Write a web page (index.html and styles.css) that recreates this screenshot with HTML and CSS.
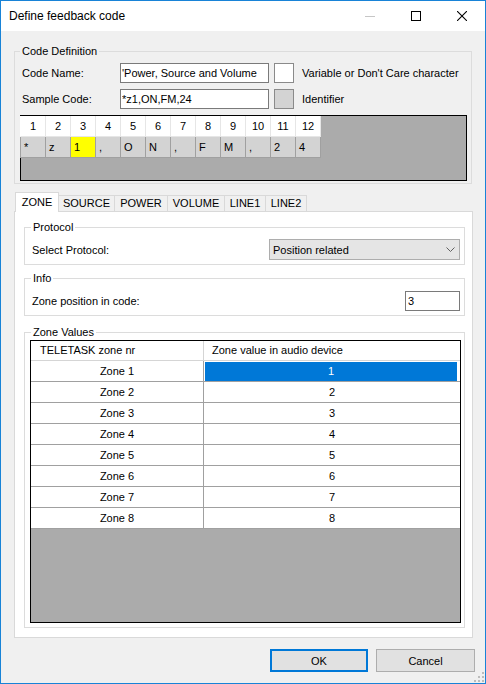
FILE: index.html
```html
<!DOCTYPE html>
<html lang="en">
<head>
  <meta charset="UTF-8">
  <title>Define feedback code</title>
  <link rel="stylesheet" href="styles.css">
</head>
<body>
  <div class="window">
    <div class="titlebar">
      <span class="title">Define feedback code</span>
      <div class="caption-buttons">
        <span class="cap-btn">
          <svg width="10" height="10" viewBox="0 0 10 10"><line x1="0" y1="5.5" x2="10" y2="5.5" stroke="#c6c6c6" /></svg>
        </span>
        <span class="cap-btn">
          <svg width="10" height="10" viewBox="0 0 10 10"><rect x="0.5" y="0.5" width="9" height="9" fill="none" stroke="#000" /></svg>
        </span>
        <span class="cap-btn">
          <svg width="10" height="10" viewBox="0 0 10 10"><path d="M0 0 L10 10 M10 0 L0 10" stroke="#000" stroke-width="1.1" /></svg>
        </span>
      </div>
    </div>

    <div class="client">
      <fieldset class="group code-def">
        <legend>Code Definition</legend>
        <div class="field-row">
          <label class="field-label" for="codeName">Code Name:</label>
          <input class="textbox" id="codeName" value="'Power, Source and Volume">
          <span class="swatch"></span>
          <span class="swatch-text">Variable or Don't Care character</span>
        </div>
        <div class="field-row">
          <label class="field-label" for="sampleCode">Sample Code:</label>
          <input class="textbox" id="sampleCode" value="*z1,ON,FM,24">
          <span class="swatch ident"></span>
          <span class="swatch-text">Identifier</span>
        </div>
        <div class="code-panel">
          <div class="code-grid" id="codeGrid"></div>
        </div>
      </fieldset>

      <div class="tabs">
        <span class="tab active">ZONE</span>
        <span class="tab w-source">SOURCE</span>
        <span class="tab w-power">POWER</span>
        <span class="tab w-volume">VOLUME</span>
        <span class="tab w-line">LINE1</span>
        <span class="tab w-line last">LINE2</span>
      </div>

      <div class="tab-page">
        <fieldset class="group protocol">
          <legend>Protocol</legend>
          <div class="inline-row">
            <span>Select Protocol:</span>
            <div class="combo">
              <span>Position related</span>
              <svg width="9" height="5" viewBox="0 0 9 5"><polyline points="0.5,0.5 4.5,4.5 8.5,0.5" fill="none" stroke="#606060" /></svg>
            </div>
          </div>
        </fieldset>

        <fieldset class="group info">
          <legend>Info</legend>
          <div class="inline-row">
            <span>Zone position in code:</span>
            <input class="textbox small" value="3">
          </div>
        </fieldset>

        <fieldset class="group zone-values">
          <legend>Zone Values</legend>
          <div class="zone-grid">
            <div class="zg-row zg-head">
              <div class="zg-cell">TELETASK zone nr</div>
              <div class="zg-cell">Zone value in audio device</div>
            </div>
            <div id="zoneRows"></div>
          </div>
        </fieldset>
      </div>

      <div class="buttons">
        <button class="btn default">OK</button>
        <button class="btn">Cancel</button>
      </div>
    </div>

    <svg class="grip" width="10" height="10" viewBox="0 0 10 10" fill="#bcbcbc">
      <rect x="8" y="0" width="2" height="2" />
      <rect x="4" y="4" width="2" height="2" />
      <rect x="8" y="4" width="2" height="2" />
      <rect x="0" y="8" width="2" height="2" />
      <rect x="4" y="8" width="2" height="2" />
      <rect x="8" y="8" width="2" height="2" />
    </svg>
  </div>

  <script>
    const sample = "*z1,ON,FM,24";
    const zonePos = 3;

    // position numbers on top, characters of the sample code below
    const grid = document.getElementById("codeGrid");
    for (let i = 1; i <= sample.length; i++) {
      const cell = document.createElement("div");
      cell.className = "cg-head";
      cell.textContent = i;
      grid.appendChild(cell);
    }
    for (let i = 0; i < sample.length; i++) {
      const cell = document.createElement("div");
      cell.className = "cg-char" + (i + 1 === zonePos ? " zone" : "");
      cell.textContent = sample[i];
      grid.appendChild(cell);
    }

    const rows = document.getElementById("zoneRows");
    for (let z = 1; z <= 8; z++) {
      const row = document.createElement("div");
      row.className = "zg-row";
      row.innerHTML = `
        <div class="zg-cell">Zone ${z}</div>
        <div class="zg-cell">${z === 1 ? '<span class="selected">1</span>' : z}</div>
      `;
      rows.appendChild(row);
    }
  </script>
</body>
</html>
```

FILE: styles.css
```css
* {
  box-sizing: border-box;
}

body {
  margin: 0;
  font-family: "Liberation Sans", Arial, sans-serif;
  font-size: 11px;
  color: #000;
  background: #f0f0f0;
}

.window {
  position: relative;
  width: 486px;
  height: 684px;
  border: 1px solid #1883d7;
  background: #f0f0f0;
}

.titlebar {
  height: 30px;
  background: #fff;
  display: flex;
  align-items: center;
  justify-content: space-between;
}

.title {
  font-size: 12px;
  padding-left: 8px;
  padding-bottom: 1px;
}

.caption-buttons {
  display: flex;
  height: 30px;
}

.cap-btn {
  width: 46px;
  display: flex;
  align-items: center;
  justify-content: center;
  padding-bottom: 1px;
}

.client {
  padding: 0 12px 0 13px;
}

/* group boxes */
.group {
  margin: 0;
  border: 1px solid #dcdcdc;
  min-width: 0;
}

.group legend {
  padding: 0 2px;
  line-height: 13px;
}

.code-def {
  margin-top: 14px;
  width: 458px;
  padding: 5px 4px 2px 5px;
}

.field-row {
  display: flex;
  align-items: center;
  height: 20px;
  margin-bottom: 6px;
  padding-left: 2px;
}

.field-label {
  width: 98px;
}

.textbox {
  width: 149px;
  height: 20px;
  border: 1px solid #7a7a7a;
  background: #fff;
  font: inherit;
  padding: 0 1px;
  margin: 0;
  outline: none;
}

.textbox.small {
  width: 55px;
}

.swatch {
  width: 20px;
  height: 20px;
  margin-left: 5px;
  border: 1px solid #8a8a8a;
  background: #fff;
}

.swatch.ident {
  background: #d3d3d3;
}

.swatch-text {
  margin-left: 8px;
}

.code-panel {
  width: 447px;
  height: 66px;
  border: 1px solid #000;
  background: #ababab;
}

.code-grid {
  display: grid;
  grid-template-columns: repeat(12, 25px);
  grid-auto-rows: 21px;
  width: 301px;
}

.cg-head,
.cg-char {
  border-bottom: 1px solid #a0a0a0;
  border-right: 1px solid #a0a0a0;
  line-height: 20px;
}

.cg-head {
  background: #fff;
  text-align: center;
  border-right-color: #e6e6e6;
  border-bottom-color: #e6e6e6;
}

.cg-char {
  background: #d3d3d3;
  padding-left: 3px;
}

.cg-head:first-child,
.cg-char:nth-child(13) {
  width: 26px;
  margin-left: -1px;
  border-left: 1px solid #a0a0a0;
}

.cg-head:first-child {
  border-left-color: #fff;
}

.cg-char.zone {
  background: #ffff00;
}

/* tabs */
.tabs {
  display: flex;
  align-items: flex-end;
  height: 19px;
  margin-top: 8px;
  padding-left: 1px;
}

.tab {
  height: 16px;
  line-height: 15px;
  text-align: center;
  border: 1px solid #d9d9d9;
  border-right: none;
  border-bottom: none;
  background: #f0f0f0;
}

.tab.active {
  position: relative;
  z-index: 1;
  width: 44px;
  height: 20px;
  line-height: 18px;
  margin-bottom: -1px;
  background: #fff;
  border-right: 1px solid #d9d9d9;
}

.w-source { width: 55px; border-left: none; }
.w-power { width: 53px; }
.w-volume { width: 57px; }
.w-line { width: 41px; }
.tab.last {
  width: 42px;
  border-right: 1px solid #d9d9d9;
}

.tab-page {
  width: 459px;
  height: 427px;
  border: 1px solid #d9d9d9;
  background: #fff;
  padding: 9px 7px 9px 9px;
}

.inline-row {
  display: flex;
  align-items: center;
  justify-content: space-between;
  padding-left: 1px;
}

.protocol {
  padding: 5px 4px 4px 6px;
}

.protocol .inline-row {
  height: 21px;
}

.combo {
  width: 191px;
  height: 21px;
  border: 1px solid #adadad;
  background: #e5e5e5;
  display: flex;
  align-items: center;
  justify-content: space-between;
  padding: 0 4px 0 3px;
}

.info {
  margin-top: 7px;
  padding: 6px 4px 4px 6px;
}

.info .textbox {
  padding-left: 2px;
}

.zone-values {
  margin-top: 10px;
  padding: 1px 3px 4px 5px;
}

.zone-values legend {
  margin-left: 1px;
}

.zone-grid {
  height: 283px;
  border: 1px solid #000;
  background: #ababab;
}

.zg-row {
  display: grid;
  grid-template-columns: 173px 256px;
  background: #fff;
}

.zg-cell {
  height: 21px;
  line-height: 20px;
  text-align: center;
  border-bottom: 1px solid #a0a0a0;
}

.zg-cell:first-child {
  border-right: 1px solid #a0a0a0;
}

.zg-head .zg-cell {
  height: 20px;
  line-height: 19px;
  text-align: left;
  padding-left: 8px;
  border-color: #d5d5d5;
}

.zg-head .zg-cell:first-child {
  padding-left: 9px;
}

.selected {
  display: block;
  height: 19px;
  line-height: 19px;
  margin: 1px 3px 0 1px;
  background: #0078d7;
  color: #fff;
}

/* dialog buttons */
.buttons {
  display: flex;
  justify-content: flex-end;
  gap: 8px;
  margin-top: 11px;
  margin-right: -2px;
}

.btn {
  width: 99px;
  height: 23px;
  font: inherit;
  color: #000;
  background: #e1e1e1;
  border: 1px solid #adadad;
  padding: 0;
}

.btn.default {
  width: 98px;
  border: 2px solid #0078d7;
}

.grip {
  position: absolute;
  right: 1px;
  bottom: 1px;
}
```
